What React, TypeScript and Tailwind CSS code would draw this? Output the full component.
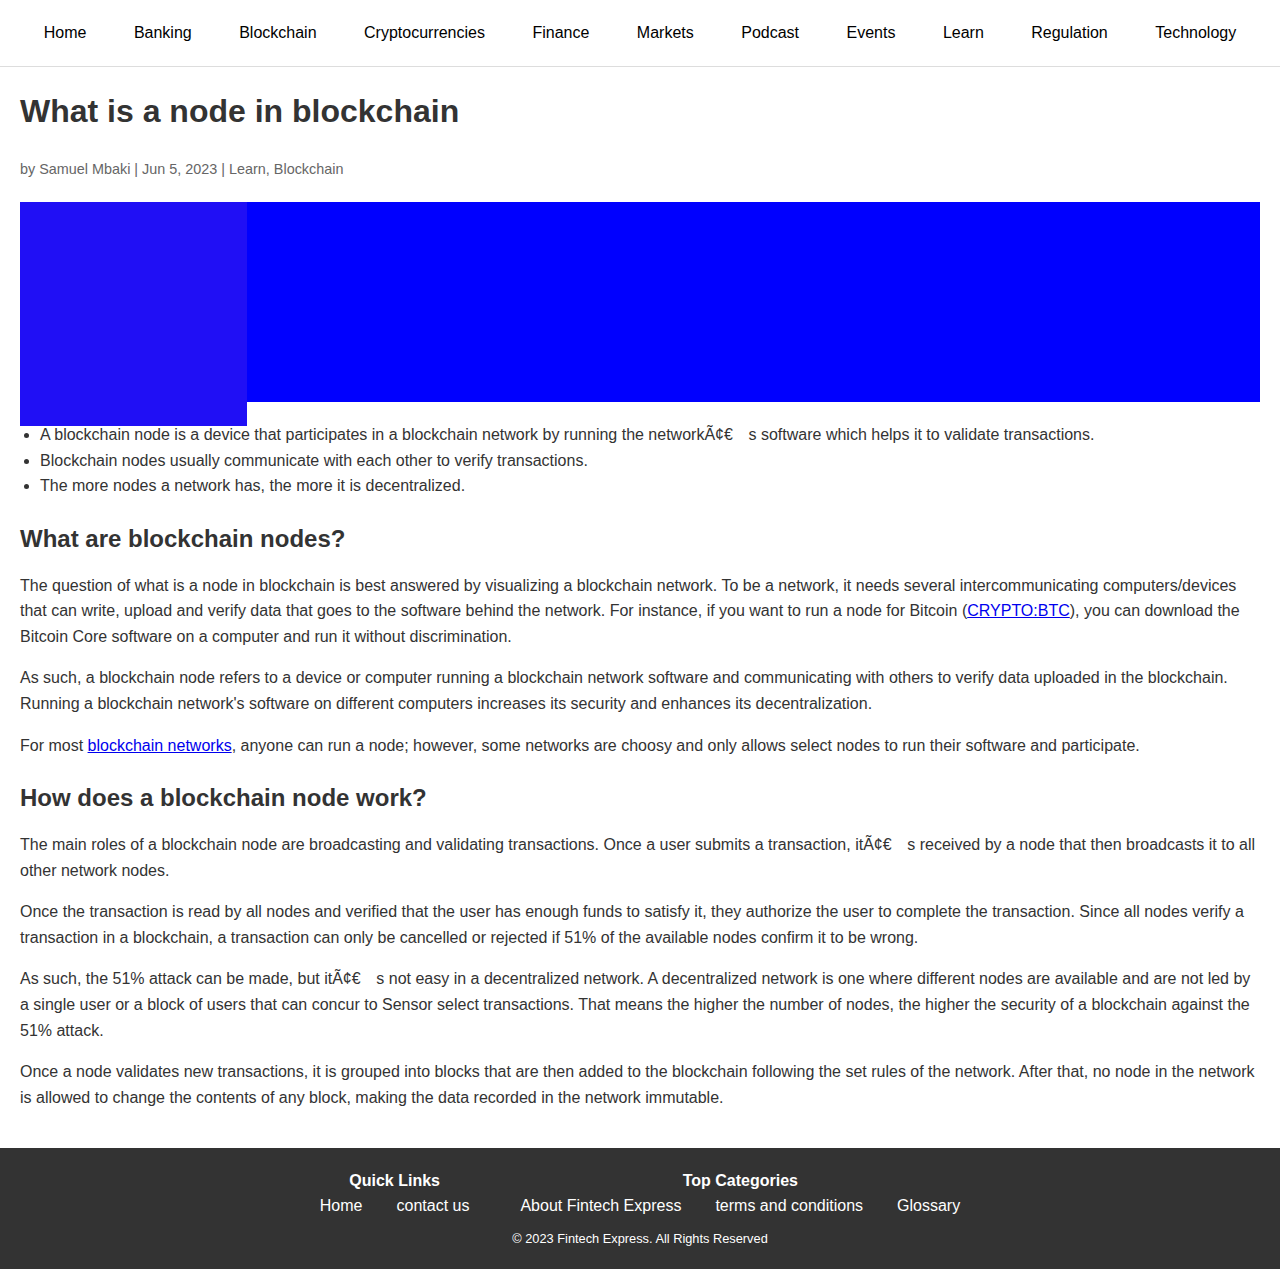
import React from "react";

const Q = "Ã¢€\u2002\u2009 s";

const navItems = [
  "Home",
  "Banking",
  "Blockchain",
  "Cryptocurrencies",
  "Finance",
  "Markets",
  "Podcast",
  "Events",
  "Learn",
  "Regulation",
  "Technology",
];

function P({ children }: { children: React.ReactNode }) {
  return <p className="mb-4 text-[16px] leading-[25.6px] text-[#333]">{children}</p>;
}

function H2({ children }: { children: React.ReactNode }) {
  return (
    <h2 className="mt-[26px] mb-[19px] text-[24px] font-bold leading-[28.8px] text-[#333]">
      {children}
    </h2>
  );
}

export default function App() {
  return (
    <div className="bg-white font-['Liberation_Sans',Arial,sans-serif]">
      <nav className="flex h-[67px] items-center justify-around border-b border-[#ddd] px-5 pb-px">
        {navItems.map((n) => (
          <a key={n} className="text-[16px] text-black">
            {n}
          </a>
        ))}
      </nav>

      <main className="px-5 pt-[25px] pb-[22px]">
        <h1 className="mb-[28px] text-[32px] font-bold leading-[38px] text-[#333]">
          What is a node in blockchain
        </h1>
        <div className="mb-[22px] text-[14.4px] leading-[22px] text-[#666]">
          by Samuel Mbaki | Jun 5, 2023 | Learn, Blockchain
        </div>

        <div className="flex items-start">
          <div className="h-[224px] w-[227px] shrink-0 bg-[#200ff5]" />
          <div className="h-[200px] flex-1 bg-[#0000ff]" />
        </div>

        <ul className="-mt-[4px] list-disc pl-5 text-[16px] leading-[25.6px] text-[#333]">
          <li>
            A blockchain node is a device that participates in a blockchain network by running the network{Q} software which helps it to validate transactions.
          </li>
          <li>Blockchain nodes usually communicate with each other to verify transactions.</li>
          <li>The more nodes a network has, the more it is decentralized.</li>
        </ul>

        <H2>What are blockchain nodes?</H2>
        <P>
          The question of what is a node in blockchain is best answered by visualizing a blockchain network. To be a network, it needs several intercommunicating computers/devices that can write, upload and verify data that goes to the software behind the network. For instance, if you want to run a node for Bitcoin (
          <a className="text-[#0000ee] underline">CRYPTO:BTC</a>), you can download the Bitcoin Core software on a computer and run it without discrimination.
        </P>
        <P>
          As such, a blockchain node refers to a device or computer running a blockchain network software and communicating with others to verify data uploaded in the blockchain. Running a blockchain network's software on different computers increases its security and enhances its decentralization.
        </P>
        <P>
          For most <a className="text-[#0000ee] underline">blockchain networks</a>, anyone can run a node; however, some networks are choosy and only allows select nodes to run their software and participate.
        </P>

        <H2>How does a blockchain node work?</H2>
        <P>
          The main roles of a blockchain node are broadcasting and validating transactions. Once a user submits a transaction, it{Q} received by a node that then broadcasts it to all other network nodes.
        </P>
        <P>
          Once the transaction is read by all nodes and verified that the user has enough funds to satisfy it, they authorize the user to complete the transaction. Since all nodes verify a transaction in a blockchain, a transaction can only be cancelled or rejected if 51% of the available nodes confirm it to be wrong.
        </P>
        <P>
          As such, the 51% attack can be made, but it{Q} not easy in a decentralized network. A decentralized network is one where different nodes are available and are not led by a single user or a block of users that can concur to Sensor select transactions. That means the higher the number of nodes, the higher the security of a blockchain against the 51% attack.
        </P>
        <P>
          Once a node validates new transactions, it is grouped into blocks that are then added to the blockchain following the set rules of the network. After that, no node in the network is allowed to change the contents of any block, making the data recorded in the network immutable.
        </P>
      </main>

      <footer className="bg-[#333] pt-[21px] pb-[22px] text-white">
        <div className="flex justify-center gap-[51px]">
          <div className="flex flex-col items-center">
            <div className="text-[16px] font-bold leading-6">Quick Links</div>
            <div className="flex gap-[34px] text-[16px] leading-[26px]">
              <a>Home</a>
              <a>contact us</a>
            </div>
          </div>
          <div className="flex flex-col items-center">
            <div className="text-[16px] font-bold leading-6">Top Categories</div>
            <div className="flex gap-[34px] text-[16px] leading-[26px]">
              <a>About Fintech Express</a>
              <a>terms and conditions</a>
              <a>Glossary</a>
            </div>
          </div>
        </div>
        <div className="mt-[11px] text-center text-[12.8px] leading-[18px]">
          © 2023 Fintech Express. All Rights Reserved
        </div>
      </footer>
    </div>
  );
}
